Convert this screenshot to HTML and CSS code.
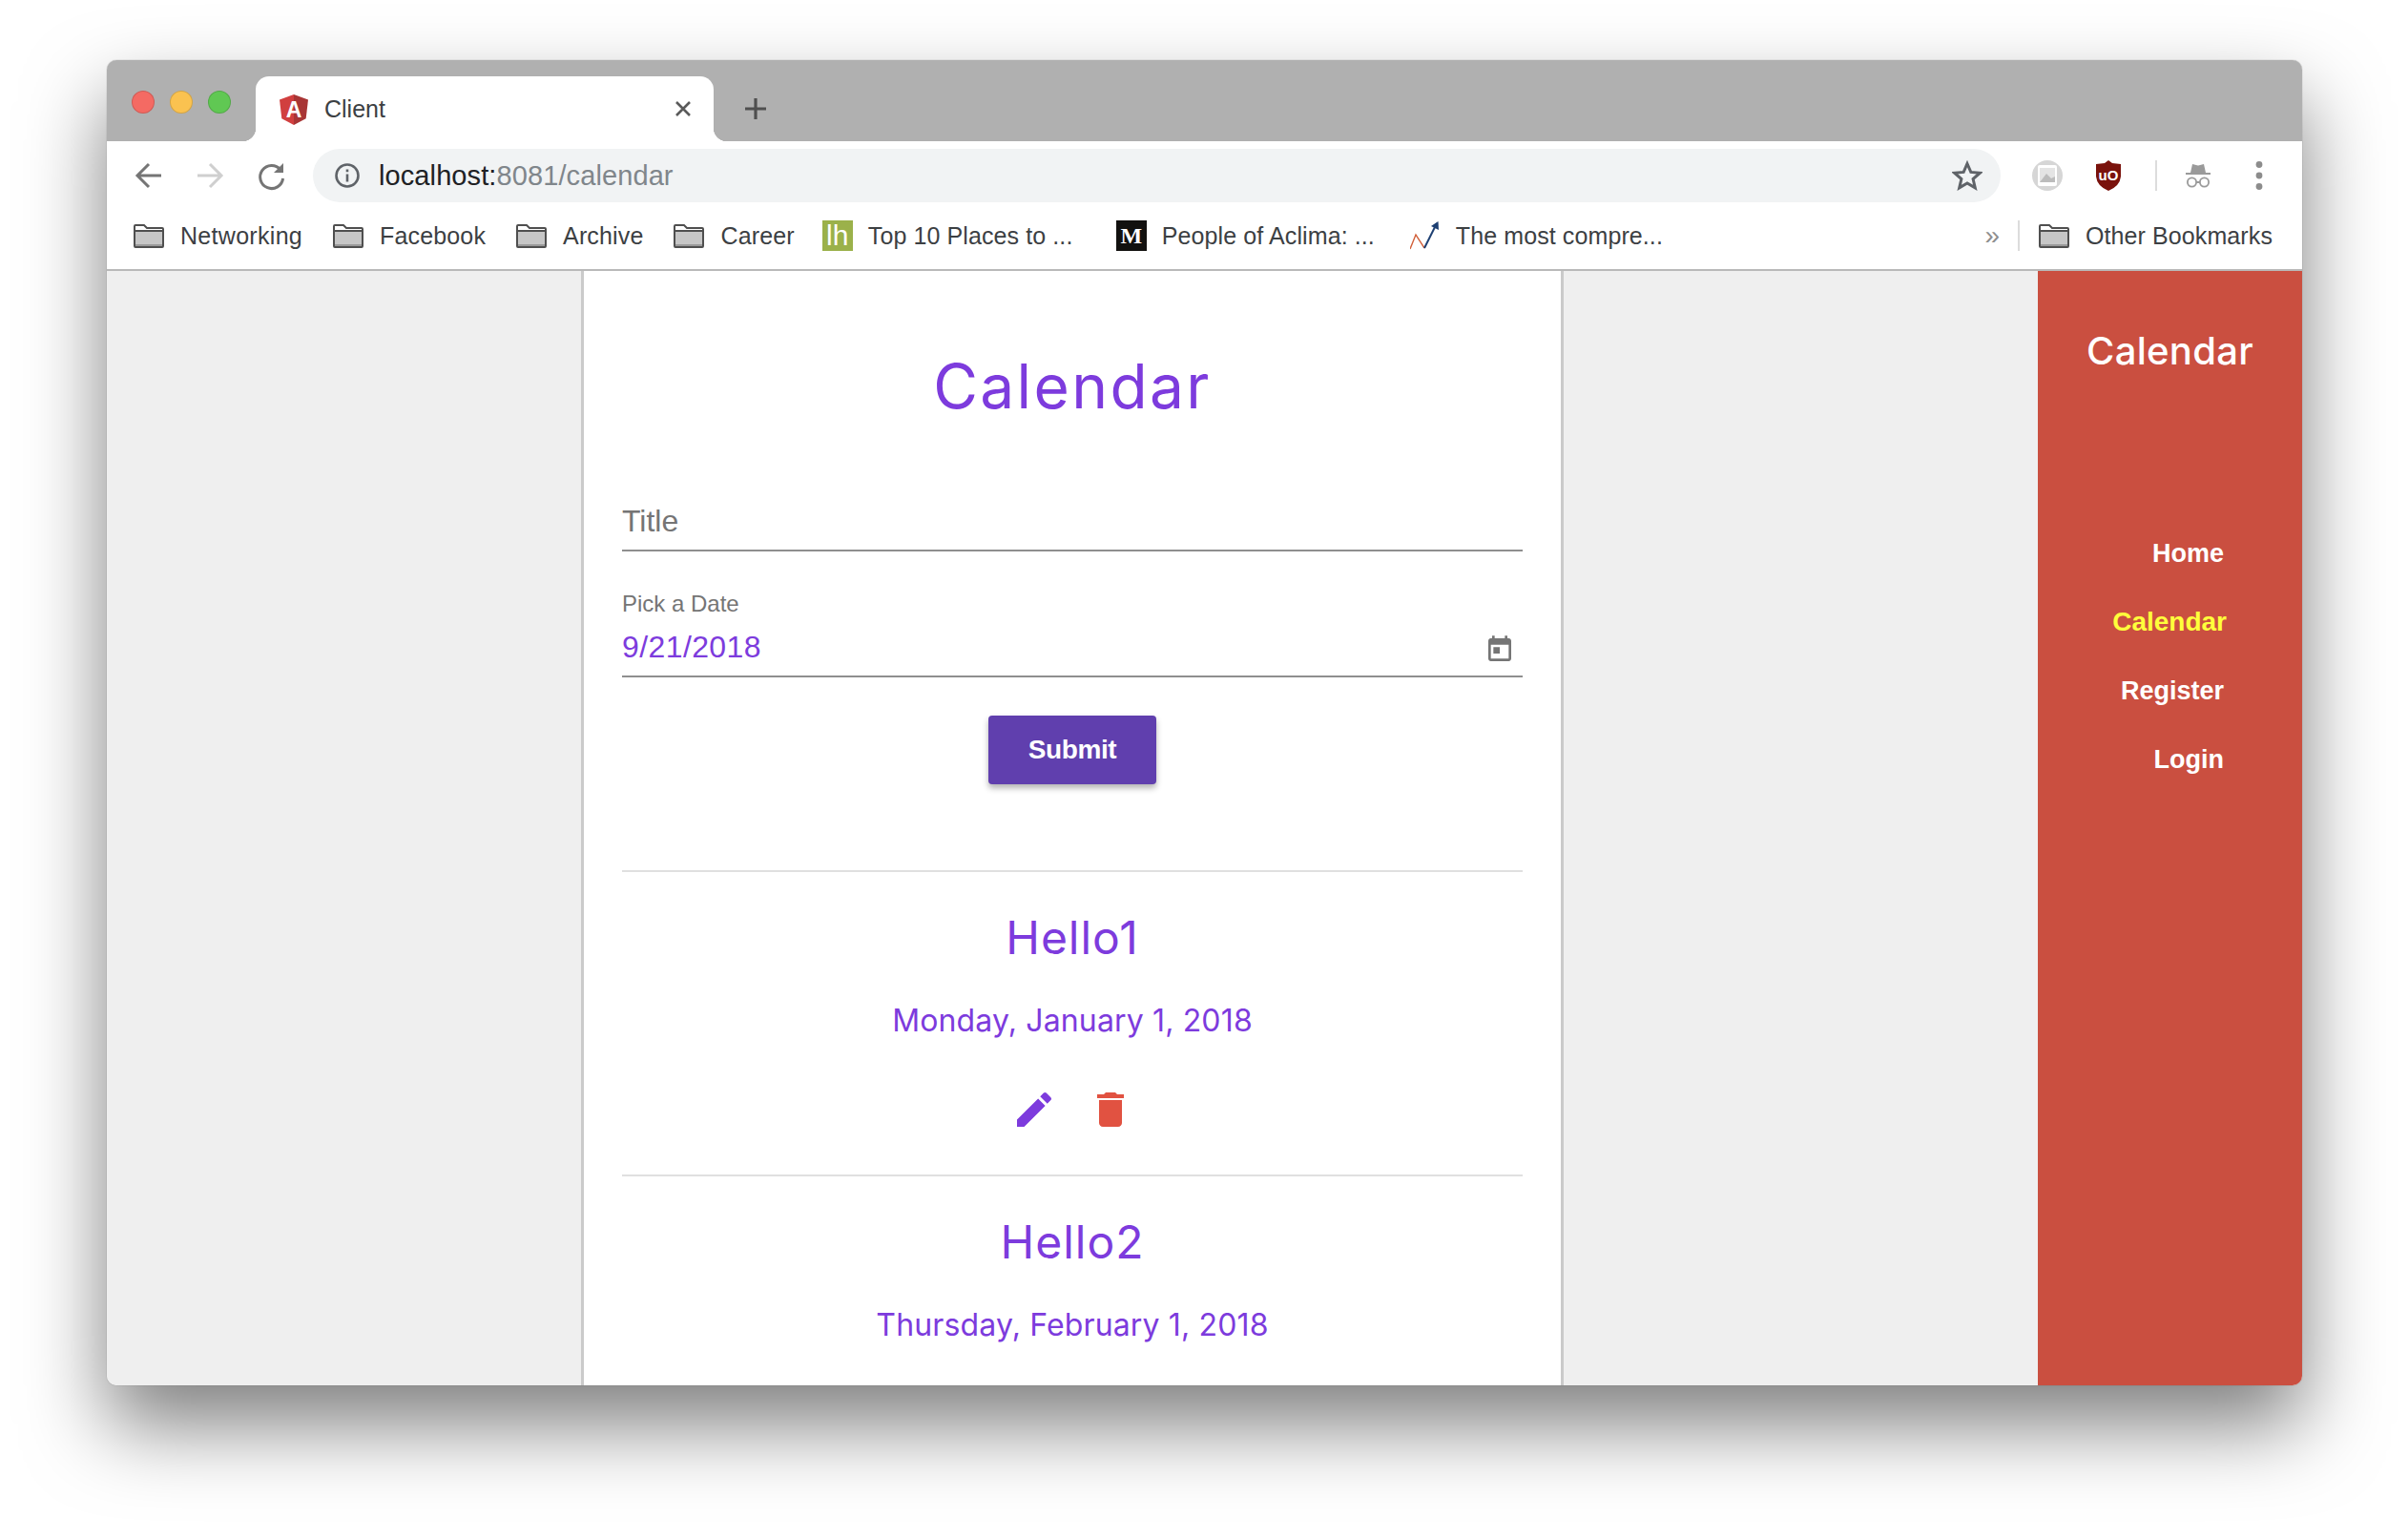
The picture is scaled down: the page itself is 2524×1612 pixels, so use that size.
FILE: index.html
```html
<!DOCTYPE html>
<html>
<head>
  <title>Client</title>
  <link rel="stylesheet" href="styles.css">
</head>
<body>
  <svg class="defs" width="0" height="0">
    <symbol id="folder" viewBox="0 0 32 25">
      <path d="M1 24V2q0-1 1-1h9l3 3h16q1 0 1 1v19z" fill="#fff"/>
      <path d="M1 8h30v16H1z" fill="#c6c6c6"/>
      <path d="M1 21h30v3H1z" fill="#9a9a9a"/>
      <path d="M1 23V2q0-1 1-1h9l3 3h16q1 0 1 1v18q0 1-1 1H2q-1 0-1-1zM1 7h30" fill="none" stroke="#4f4f4f" stroke-width="2"/>
    </symbol>
  </svg>

  <div class="window">
    <div class="tabstrip">
      <div class="lights">
        <span class="light red"></span>
        <span class="light yellow"></span>
        <span class="light green"></span>
      </div>
      <div class="tab">
        <svg class="favicon" viewBox="0 0 30 32">
          <path d="M15 0L0 5.4l2.3 19.8L15 32z" fill="#d13f3f"/>
          <path d="M15 0l15 5.4-2.3 19.8L15 32z" fill="#a83535"/>
          <text x="15" y="24" text-anchor="middle" class="favicon-letter">A</text>
        </svg>
        <span class="tab-title">Client</span>
        <svg class="tab-close" viewBox="0 0 22 22"><path d="M4 4l14 14M18 4L4 18" stroke="#5a5a5a" stroke-width="2.6"/></svg>
      </div>
      <svg class="new-tab" viewBox="0 0 24 24"><path d="M12 1v22M1 12h22" stroke="#4f4f4f" stroke-width="3.2"/></svg>
    </div>

    <div class="toolbar">
      <svg class="tool" viewBox="0 0 40 40"><path d="M33 20H9M20 8L8 20l12 12" fill="none" stroke="#757575" stroke-width="3"/></svg>
      <svg class="tool" viewBox="0 0 40 40"><path d="M7 20h24M20 8l12 12-12 12" fill="none" stroke="#cfcfcf" stroke-width="3"/></svg>
      <svg class="tool" viewBox="0 0 40 40"><path d="M30 14a12 12 0 1 0 2.6 9" fill="none" stroke="#757575" stroke-width="3"/><path d="M33 7v10H23z" fill="#757575"/></svg>
      <div class="urlbar">
        <svg class="info" viewBox="0 0 26 26"><circle cx="13" cy="13" r="11.5" fill="none" stroke="#5f6368" stroke-width="2.6"/><path d="M11.7 6.5h2.6v2.7h-2.6zM11.7 11.5h2.6v8h-2.6z" fill="#5f6368"/></svg>
        <span class="url"><span class="url-host">localhost:</span>8081/calendar</span>
        <svg class="star" viewBox="0 0 32 32"><path d="M16 3.5l3.8 8.9 9.6.8-7.3 6.3 2.2 9.4-8.3-5-8.3 5 2.2-9.4-7.3-6.3 9.6-.8z" fill="none" stroke="#5f6368" stroke-width="3"/></svg>
      </div>
      <svg class="tool ext-first" viewBox="0 0 40 40">
        <circle cx="20" cy="20" r="16" fill="#d6d6d6"/>
        <rect x="10" y="9" width="20" height="22" rx="2" fill="#fff"/>
        <rect x="12" y="12" width="16" height="15" fill="#e4e4e4"/>
        <path d="M12 27l7-9 5 5 4-2v6z" fill="#bcbcbc"/>
      </svg>
      <svg class="tool" viewBox="0 0 40 40">
        <path d="M20 4l4 3 9 1v13q-1 10-13 15Q8 31 7 21V8l9-1z" fill="#7a120c"/>
        <text x="20" y="25" text-anchor="middle" class="ublock-letters">uO</text>
      </svg>
      <span class="tool-divider"></span>
      <svg class="tool" viewBox="0 0 40 40">
        <path d="M14 8l6 1.500L26 8l2 9H12z" fill="#9a9a9a"/>
        <path d="M7 17h26v2H7z" fill="#9a9a9a"/>
        <circle cx="13.5" cy="27" r="4.6" fill="none" stroke="#9a9a9a" stroke-width="1.8"/>
        <circle cx="26.5" cy="27" r="4.6" fill="none" stroke="#9a9a9a" stroke-width="1.8"/>
        <path d="M18 27h4" stroke="#9a9a9a" stroke-width="1.8"/>
      </svg>
      <svg class="tool" viewBox="0 0 40 40"><circle cx="20" cy="8.5" r="3.4" fill="#8c8c8c"/><circle cx="20" cy="20" r="3.4" fill="#8c8c8c"/><circle cx="20" cy="31.5" r="3.4" fill="#8c8c8c"/></svg>
    </div>

    <div class="bookmarks">
      <a class="bookmark"><svg class="folder"><use href="#folder"/></svg>Networking</a>
      <a class="bookmark"><svg class="folder"><use href="#folder"/></svg>Facebook</a>
      <a class="bookmark"><svg class="folder"><use href="#folder"/></svg>Archive</a>
      <a class="bookmark career"><svg class="folder"><use href="#folder"/></svg>Career</a>
      <a class="bookmark site"><span class="site-icon lh">lh</span>Top 10 Places to ...</a>
      <a class="bookmark site"><span class="site-icon medium">M</span>People of Aclima: ...</a>
      <a class="bookmark site">
        <svg class="site-icon" viewBox="0 0 32 32">
          <path d="M0 30l6-15 9 14" fill="none" stroke="#d2603a" stroke-width="1.4"/>
          <path d="M15 29L28 3" fill="none" stroke="#1d3f72" stroke-width="2"/>
          <path d="M22 6l7.500-5 .5 9z" fill="#1d3f72"/>
        </svg>The most compre...</a>
      <span class="more">»</span>
      <span class="bookmarks-divider"></span>
      <a class="bookmark last"><svg class="folder"><use href="#folder"/></svg>Other Bookmarks</a>
    </div>

    <div class="content">
      <main class="main">
        <div class="card">
          <h1 class="page-title">Calendar</h1>

          <div class="field title-field">Title</div>

          <label class="date-label">Pick a Date</label>
          <div class="field date-field">
            <span class="date-value">9/21/2018</span>
            <svg class="date-icon" viewBox="0 0 24 24"><path d="M19 3h-1V1h-2v2H8V1H6v2H5c-1.110 0-1.990.9-1.990 2L3 19c0 1.100.89 2 2 2h14c1.100 0 2-.9 2-2V5c0-1.100-.9-2-2-2zm0 16H5V8h14v11zM7 10h5v5H7z" fill="#757575"/></svg>
          </div>

          <div class="submit-row"><button class="submit">Submit</button></div>

          <section class="event">
            <h2 class="event-title">Hello1</h2>
            <p class="event-date">Monday, January 1, 2018</p>
            <div class="event-actions">
              <svg class="action edit" viewBox="0 0 24 24"><path d="M3 17.250V21h3.750L17.810 9.940l-3.750-3.750L3 17.250zM20.710 7.040c.39-.39.39-1.020 0-1.410l-2.340-2.340c-.39-.39-1.020-.39-1.410 0l-1.830 1.830 3.750 3.750 1.830-1.830z"/></svg>
              <svg class="action delete" viewBox="0 0 24 24"><path d="M6 19c0 1.100.9 2 2 2h8c1.100 0 2-.9 2-2V7H6v12zM19 4h-3.500l-1-1h-5l-1 1H5v2h14V4z"/></svg>
            </div>
          </section>

          <section class="event">
            <h2 class="event-title">Hello2</h2>
            <p class="event-date">Thursday, February 1, 2018</p>
          </section>
        </div>
      </main>

      <aside class="sidebar">
        <div class="brand">Calendar</div>
        <nav class="nav">
          <a class="nav-link">Home</a>
          <a class="nav-link active">Calendar</a>
          <a class="nav-link">Register</a>
          <a class="nav-link">Login</a>
        </nav>
      </aside>
    </div>
  </div>
</body>
</html>
```

FILE: styles.css
```css
* {
  box-sizing: border-box;
}

html, body {
  height: 100%;
}

body {
  margin: 0;
  background: #fff;
  overflow: hidden;
  font-family: "Liberation Sans", Arial, sans-serif;
}

.defs {
  position: absolute;
}

.window {
  display: flex;
  flex-direction: column;
  width: 2301px;
  height: 1389px;
  margin: 63px 0 0 112px;
  border-radius: 10px;
  overflow: hidden;
  box-shadow: 0 42px 84px rgba(0, 0, 0, 0.5), 0 0 1px rgba(0, 0, 0, 0.5);
}

/* tab strip */
.tabstrip {
  display: flex;
  align-items: flex-start;
  flex: none;
  height: 85px;
  background: #b0b0b0;
}

.lights {
  display: flex;
  gap: 16px;
  margin: 32px 0 0 26px;
}

.light {
  width: 24px;
  height: 24px;
  border-radius: 50%;
  border: 1px solid rgba(0, 0, 0, 0.15);
}

.red { background: #f46a63; }
.yellow { background: #fac250; }
.green { background: #60c853; }

.tab {
  position: relative;
  display: flex;
  align-items: center;
  width: 480px;
  height: 68px;
  margin: 17px 0 0 26px;
  padding: 0 21px 0 25px;
  background: #fff;
  border-radius: 14px 14px 0 0;
}

.tab::before,
.tab::after {
  content: "";
  position: absolute;
  bottom: 0;
  width: 14px;
  height: 14px;
  background: radial-gradient(circle at 0 0, #b0b0b0 14px, #fff 14.5px);
}

.tab::before {
  left: -14px;
}

.tab::after {
  right: -14px;
  background: radial-gradient(circle at 100% 0, #b0b0b0 14px, #fff 14.5px);
}

.favicon {
  width: 30px;
  height: 32px;
  margin-top: 1px;
}

.favicon-letter {
  fill: #fff;
  font: bold 23px "Liberation Sans", sans-serif;
}

.tab-title {
  margin-left: 17px;
  font-size: 25px;
  color: #3c4043;
}

.tab-close {
  width: 22px;
  height: 22px;
  margin-left: auto;
}

.new-tab {
  width: 24px;
  height: 24px;
  margin: 39px 0 0 32px;
}

/* toolbar */
.toolbar {
  display: flex;
  align-items: center;
  flex: none;
  height: 74px;
  padding: 0 0 2px 24px;
  background: #fff;
}

.tool {
  flex: none;
  width: 40px;
  height: 40px;
  margin-right: 24px;
}

.ext-first {
  margin-left: 5px;
}

.tool-divider {
  flex: none;
  width: 2px;
  height: 32px;
  margin: 0 23px 0 5px;
  background: #dcdcdc;
}

.ublock-letters {
  fill: #fff;
  font: bold 15px "Liberation Sans", sans-serif;
}

.urlbar {
  display: flex;
  align-items: center;
  flex: none;
  width: 1769px;
  height: 56px;
  margin-right: 24px;
  padding: 0 19px 0 23px;
  background: #f1f3f4;
  border-radius: 28px;
}

.info {
  width: 26px;
  height: 26px;
}

.url {
  margin-left: 20px;
  font-size: 29px;
  letter-spacing: 0.1px;
  color: #80868b;
}

.url-host {
  color: #202124;
}

.star {
  width: 32px;
  height: 32px;
  margin-left: auto;
}

/* bookmarks */
.bookmarks {
  display: flex;
  align-items: center;
  flex: none;
  height: 62px;
  padding: 0 31px 10px 28px;
  background: #fff;
  border-bottom: 2px solid #b9b9b9;
}

.bookmark {
  display: flex;
  align-items: center;
  margin-right: 32px;
  font-size: 25px;
  letter-spacing: 0.15px;
  color: #3c4043;
  white-space: nowrap;
}

.bookmark:first-child {
  letter-spacing: 0.3px;
}

.bookmark.career {
  margin-right: 29px;
}

.bookmark.site {
  margin-right: 0;
  width: 308px;
  letter-spacing: 0.1px;
}

.folder {
  flex: none;
  width: 32px;
  height: 25px;
  margin-right: 17px;
}

.site-icon {
  flex: none;
  display: flex;
  align-items: center;
  justify-content: center;
  width: 32px;
  height: 32px;
  margin-right: 16px;
}

.lh {
  background: #9bb14a;
  color: #fff;
  font-size: 30px;
  font-weight: 400;
}

.medium {
  background: #12110f;
  color: #fff;
  font: bold 24px "Liberation Serif", serif;
}

.more {
  margin-left: auto;
  font-size: 28px;
  color: #8e8e8e;
}

.bookmarks-divider {
  width: 2px;
  height: 32px;
  margin: 0 20px 0 19px;
  background: #dcdcdc;
}

.bookmark.last {
  margin-right: 0;
  letter-spacing: 0.1px;
}

/* page content */
.content {
  display: flex;
  flex: 1;
  min-height: 0;
  background: #efefef;
}

.main {
  display: flex;
  justify-content: center;
  flex: 1;
}

.card {
  width: 1030px;
  height: 100%;
  padding: 81px 40px 0;
  background: #fff;
  border-left: 3px solid #cacaca;
  border-right: 3px solid #cacaca;
  color: #7d3bdd;
  overflow: hidden;
}

.page-title {
  margin: 0;
  font: 400 64px/80px Inter, sans-serif;
  letter-spacing: 2.4px;
  text-align: center;
}

.field {
  padding-bottom: 10px;
  font-size: 32px;
  line-height: 40px;
  border-bottom: 2px solid #8f8f8f;
}

.title-field {
  margin-top: 81px;
  color: #757575;
}

.date-label {
  display: block;
  margin-top: 41px;
  font-size: 24px;
  line-height: 28px;
  color: #757575;
}

.date-field {
  display: flex;
  align-items: center;
  justify-content: space-between;
  margin-top: 11px;
}

.date-value {
  letter-spacing: 0.4px;
}

.date-icon {
  width: 32px;
  height: 32px;
  margin: 6px 8px 0 0;
}

.submit-row {
  display: flex;
  justify-content: center;
  margin-top: 40px;
}

.submit {
  width: 176px;
  height: 72px;
  padding: 0;
  border: 0;
  border-radius: 4px;
  background: #603fae;
  color: #fff;
  font: bold 28px "Liberation Sans", sans-serif;
  letter-spacing: -0.4px;
  box-shadow: 0 4px 6px rgba(0, 0, 0, 0.3);
}

.event {
  margin-top: 90px;
  padding-top: 39px;
  border-top: 2px solid #e0e0e0;
  text-align: center;
}

.event + .event {
  margin-top: 44px;
}

.event-title {
  margin: 0;
  font: 400 48px/60px Inter, sans-serif;
  letter-spacing: 1px;
}

.event-date {
  margin: 37px 0 0;
  font: 400 32px/40px Inter, sans-serif;
  letter-spacing: 0.15px;
}

.event-actions {
  display: flex;
  justify-content: center;
  gap: 32px;
  margin-top: 49px;
}

.action {
  width: 48px;
  height: 48px;
}

.edit { fill: #7d3bdd; }
.delete { fill: #e15241; }

/* sidebar */
.sidebar {
  flex: none;
  width: 277px;
  background: #ca4f40;
  color: #fff;
}

.brand {
  margin-top: 60px;
  font: 500 40px/48px Inter, sans-serif;
  letter-spacing: 0.3px;
  text-align: center;
}

.nav {
  display: flex;
  flex-direction: column;
  align-items: flex-end;
  margin-top: 152px;
  padding-right: 82px;
}

.nav-link {
  font-size: 27px;
  font-weight: bold;
  line-height: 72px;
}

.nav-link.active {
  margin-right: -3px;
  font-size: 28px;
  color: #ffff3b;
}
```
